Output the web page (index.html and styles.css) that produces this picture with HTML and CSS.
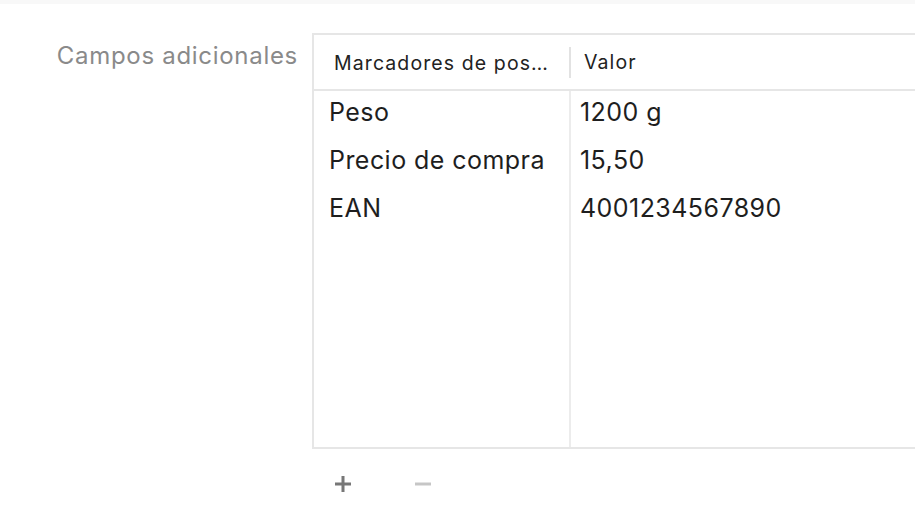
FILE: index.html
```html
<!DOCTYPE html>
<html lang="es">
<head>
<meta charset="utf-8">
<title>Campos adicionales</title>
<link rel="stylesheet" href="styles.css">
</head>
<body>
<div class="topbar"></div>
<div class="form-row">
  <div class="label">Campos adicionales</div>
  <div class="field">
    <div class="table">
      <div class="thead">
        <div class="th c1">Marcadores de pos…</div>
        <div class="th c2">Valor</div>
      </div>
      <div class="tbody">
        <div class="col c1">
          <div class="cell">Peso</div>
          <div class="cell">Precio de compra</div>
          <div class="cell">EAN</div>
        </div>
        <div class="col c2">
          <div class="cell">1200 g</div>
          <div class="cell">15,50</div>
          <div class="cell">4001234567890</div>
        </div>
      </div>
    </div>
    <div class="buttons">
      <button class="btn add" aria-label="Añadir">
        <svg width="16" height="16" viewBox="0 0 16 16"><path d="M8 0v16M0 8h16" stroke="#777" stroke-width="3"/></svg>
      </button>
      <button class="btn remove" aria-label="Quitar">
        <svg width="16" height="16" viewBox="0 0 16 16"><path d="M0 8h16" stroke="#c6c6c6" stroke-width="3"/></svg>
      </button>
    </div>
  </div>
</div>
</body>
</html>
```

FILE: styles.css
```css
html, body {
  margin: 0;
  padding: 0;
  background: #ffffff;
  overflow: hidden;
  font-family: Inter, "Noto Sans", "Liberation Sans", sans-serif;
}

.topbar {
  height: 4px;
  background: #f8f8f8;
}

.form-row {
  display: flex;
  gap: 14px;
  padding-top: 29px;
}

.label {
  width: 298px;
  flex: none;
  text-align: right;
  color: #8a8a8a;
  font-size: 24px;
  letter-spacing: 0.7px;
  line-height: 28px;
  padding-top: 9px;
  white-space: nowrap;
}

.field {
  flex: none;
  width: 640px;
}

.table {
  border-top: 2px solid #e6e6e6;
  border-left: 2px solid #e6e6e6;
  border-bottom: 2px solid #e6e6e6;
}

.thead {
  display: flex;
  height: 54px;
  align-items: center;
  border-bottom: 2px solid #e6e6e6;
}

.th {
  font-size: 19.5px;
  letter-spacing: 1.1px;
  color: #222;
  white-space: nowrap;
}

.thead .c1 {
  width: 257px;
  flex: none;
  padding-left: 20px;
  box-sizing: border-box;
  border-right: 2px solid #e2e2e2;
  height: 31px;
  line-height: 32px;
  overflow: hidden;
}

.thead .c2 {
  padding-left: 13px;
  line-height: 32px;
}

.tbody {
  display: flex;
  height: 356px;
}

.col.c1 {
  width: 257px;
  flex: none;
  box-sizing: border-box;
  border-right: 2px solid #ececec;
  padding-left: 15px;
}

.col.c2 {
  padding-left: 9px;
}

.cell {
  height: 48px;
  line-height: 43px;
  font-size: 25px;
  letter-spacing: 0.45px;
  color: #1e1e1e;
  white-space: nowrap;
}

.buttons {
  display: flex;
  gap: 64px;
  padding-left: 23px;
  padding-top: 27px;
}

.btn {
  border: 0;
  background: none;
  padding: 0;
  width: 16px;
  height: 16px;
  display: flex;
}
```
